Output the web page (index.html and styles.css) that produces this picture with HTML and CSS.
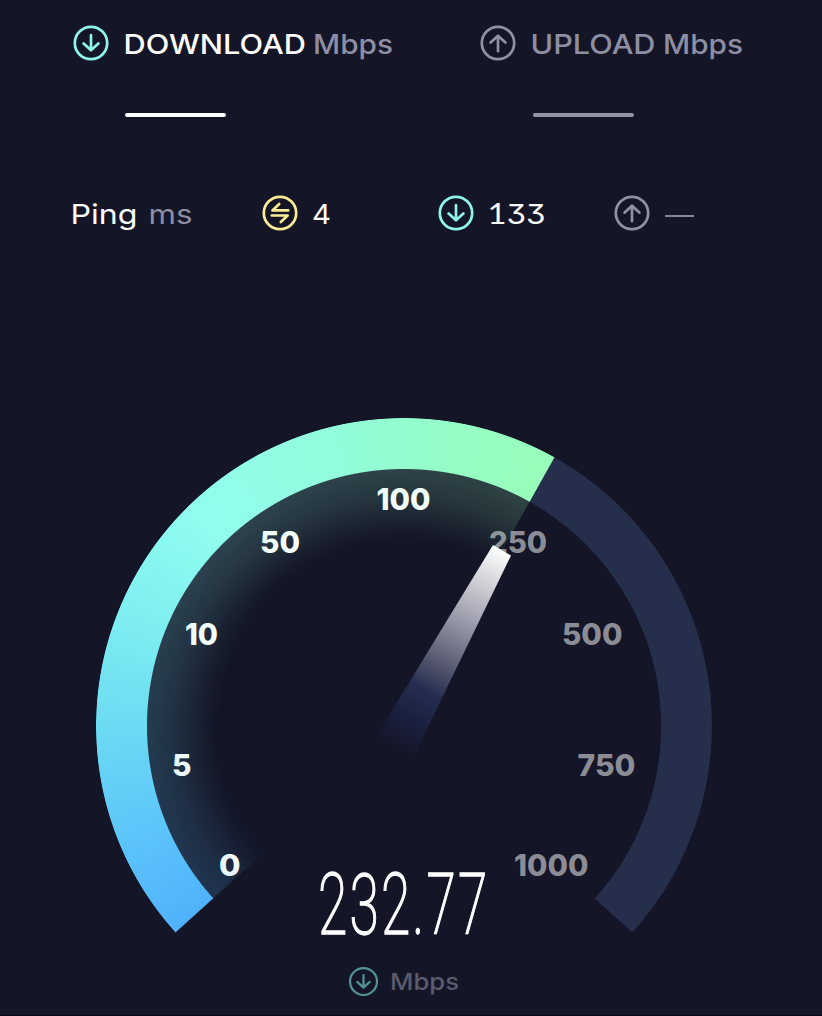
FILE: index.html
```html
<!DOCTYPE html>
<html lang="en">
<head>
<meta charset="utf-8">
<title>Speed test</title>
<link rel="stylesheet" href="styles.css">
</head>
<body>
<svg class="defs" width="0" height="0" aria-hidden="true">
  <symbol id="down" viewBox="0 0 36 36"><circle cx="18" cy="18" r="16.2"/><path d="M18 10.2V25M10.6 18.4 18 25.3 25.4 18.4"/></symbol>
  <symbol id="up" viewBox="0 0 36 36"><circle cx="18" cy="18" r="16.2"/><path d="M18 26.2V11M10.6 17.6 18 10.7 25.4 17.6"/></symbol>
  <symbol id="swap" viewBox="0 0 36 36"><circle cx="18" cy="18" r="16.2"/><path d="M26.2 15.4H10.4L17.2 9M9.8 20.5H25.6L18.8 27"/></symbol>
</svg>
<main class="app">
  <section class="results">
    <div class="result">
      <svg class="icon teal"><use href="#down"/></svg>
      <div class="heading">
        <svg class="label" width="275" height="36"><text class="white medium" x="-1.5" y="29" textLength="182.5" lengthAdjust="spacingAndGlyphs">DOWNLOAD</text><text class="muted medium" x="188" y="29" textLength="80" lengthAdjust="spacingAndGlyphs">Mbps</text></svg>
        <div class="rule"></div>
      </div>
    </div>
    <div class="result idle">
      <svg class="icon muted-icon"><use href="#up"/></svg>
      <div class="heading">
        <svg class="label" width="220" height="36"><text class="muted medium" x="-1.5" y="29" textLength="125" lengthAdjust="spacingAndGlyphs">UPLOAD</text><text class="muted medium" x="131" y="29" textLength="80" lengthAdjust="spacingAndGlyphs">Mbps</text></svg>
        <div class="rule"></div>
      </div>
    </div>
  </section>

  <section class="ping">
    <svg class="label" width="130" height="40"><text class="white" x="-2.5" y="29" textLength="67" lengthAdjust="spacingAndGlyphs">Ping</text><text class="muted" x="75.5" y="29" textLength="44" lengthAdjust="spacingAndGlyphs">ms</text></svg>
    <div class="stat"><svg class="icon yellow"><use href="#swap"/></svg><svg class="label" width="60" height="40"><text class="white" x="-1" y="29" textLength="19" lengthAdjust="spacingAndGlyphs">4</text></svg></div>
    <div class="stat"><svg class="icon teal"><use href="#down"/></svg><svg class="label" width="60" height="40"><text class="white" y="29"><tspan class="footed" x="-1.5" textLength="19" lengthAdjust="spacingAndGlyphs">1</tspan><tspan class="flat" x="17.5" textLength="39" lengthAdjust="spacingAndGlyphs">33</tspan></text></svg></div>
    <div class="stat"><svg class="icon muted-icon"><use href="#up"/></svg><span class="dash"></span></div>
  </section>

  <section class="gauge">
    <div class="glow"></div>
    <div class="progress"></div>
    <svg class="dial" viewBox="96 418 616 616">
      <defs>
        <linearGradient id="needle" gradientUnits="userSpaceOnUse" x1="502" y1="550" x2="396" y2="752">
          <stop offset="0" stop-color="#fff"/><stop offset=".12" stop-color="#dddde1"/><stop offset=".35" stop-color="#9b9cab"/><stop offset=".6" stop-color="#4a4d66"/><stop offset=".7" stop-color="#242d51"/><stop offset=".84" stop-color="#1a2040"/><stop offset="1" stop-color="#141526"/>
        </linearGradient>
      </defs>
      <path fill="#252f4b" d="M554 457A308 308 0 0 1 632.4 932.5L594.8 898.5A257 257 0 0 0 529.2 501.6Z"/>
      <g class="ticks">
        <text x="219" y="876" textLength="21.5" lengthAdjust="spacingAndGlyphs">0</text>
        <text x="172" y="775.5" textLength="19.5" lengthAdjust="spacingAndGlyphs">5</text>
        <text x="185" y="645" textLength="33" lengthAdjust="spacingAndGlyphs">10</text>
        <text x="260" y="553" textLength="40" lengthAdjust="spacingAndGlyphs">50</text>
        <text x="376.5" y="510" textLength="54" lengthAdjust="spacingAndGlyphs">100</text>
        <g class="off">
          <text x="489" y="553" textLength="58" lengthAdjust="spacingAndGlyphs">250</text>
          <text x="562" y="645" textLength="60.5" lengthAdjust="spacingAndGlyphs">500</text>
          <text x="577.5" y="775.5" textLength="58" lengthAdjust="spacingAndGlyphs">750</text>
          <text x="514" y="876" textLength="74.5" lengthAdjust="spacingAndGlyphs">1000</text>
        </g>
      </g>
      <path fill="url(#needle)" d="M493 545 511 555.5 411 762 374 740Z"/>
      <text class="speed" x="0" y="0" transform="translate(318 934) scale(.62 1)" textLength="273">232.77</text>
      <g class="unit">
        <svg x="348.5" y="966.5" width="30" height="30" class="unit-icon"><use href="#down"/></svg>
        <text class="unit-text" x="390" y="990" textLength="69" lengthAdjust="spacingAndGlyphs">Mbps</text>
      </g>
    </svg>
  </section>
</main>
</body>
</html>
```
FILE: styles.css
```css
* { box-sizing: border-box; }
body { margin: 0; background: #141526; font-family: Inter, "Open Sans", sans-serif; }
.defs { position: absolute; }
.app { width: 822px; height: 1016px; overflow: hidden; background: #141526; border-bottom: 1px solid #07070d; }
svg { display: block; }

.results { display: grid; grid-template-columns: 407px 1fr; padding: 25px 0 0 73px; height: 193px; }
.result { display: flex; gap: 16px; }
.heading { display: flex; flex-direction: column; gap: 52px; }
.icon { width: 36px; height: 36px; flex: none; fill: none; stroke-width: 2.7; stroke-linecap: round; stroke-linejoin: round; }
.label { overflow: visible; font-size: 27.5px; flex: none; }
.medium { font-weight: 500; }
.white { fill: #fff; }
.muted { fill: #8d8ea2; }
.teal { stroke: #8ff5ea; }
.yellow { stroke: #fbec95; }
.muted-icon { stroke: #9091a4; }
.rule { width: 101px; height: 4px; border-radius: 2px; background: #fff; }
.idle .rule { background: #9293a6; margin-left: 1px; }

.ping { display: grid; grid-template-columns: 189px 176px 176px 1fr; padding: 2px 0 0 73px; height: 225px; }
.stat { display: flex; gap: 15px; }
.dash { width: 29px; height: 2px; margin-top: 20px; background: #85869a; }
.footed { font-family: Lato, "DejaVu Sans", sans-serif; font-size: 28px; }
.flat { font-feature-settings: "cv09"; }

.gauge { display: grid; width: 616px; height: 597px; margin-left: 96px; }
.gauge > * { grid-area: 1 / 1; width: 616px; height: 616px; }
.progress, .glow {
  background: conic-gradient(from 228deg, #50b2fb 0deg, #5cc5fa 20deg, #6cdcf3 43deg, #7feff1 65deg, #90feee 88deg, #92fcda 120deg, #95fcc6 141deg, #98fcba 161.15deg, transparent 161.35deg, transparent 359.8deg, #50b2fb 360deg);
}
.progress { mask: radial-gradient(circle at center, transparent 256.5px, #000 257.5px, #000 307.5px, transparent 308.3px); }
.glow { mask: radial-gradient(circle at center, transparent 180px, rgba(0,0,0,.025) 195px, rgba(0,0,0,.09) 214px, rgba(0,0,0,.15) 232px, rgba(0,0,0,.2) 257px, transparent 257.5px); }
.dial { overflow: visible; }
.ticks { fill: #fff; font-weight: 800; font-size: 29.5px; }
.off { fill: #8c8c96; }
.speed { fill: #fff; stroke: #fff; stroke-width: 1.1px; vector-effect: non-scaling-stroke; font-family: Roboto, sans-serif; font-weight: 200; font-size: 86px; }
.unit-icon { fill: none; stroke: #529295; stroke-width: 2.7; stroke-linecap: round; stroke-linejoin: round; }
.unit-text { fill: #5a5b6c; font-weight: 500; font-size: 23.5px; }
```
